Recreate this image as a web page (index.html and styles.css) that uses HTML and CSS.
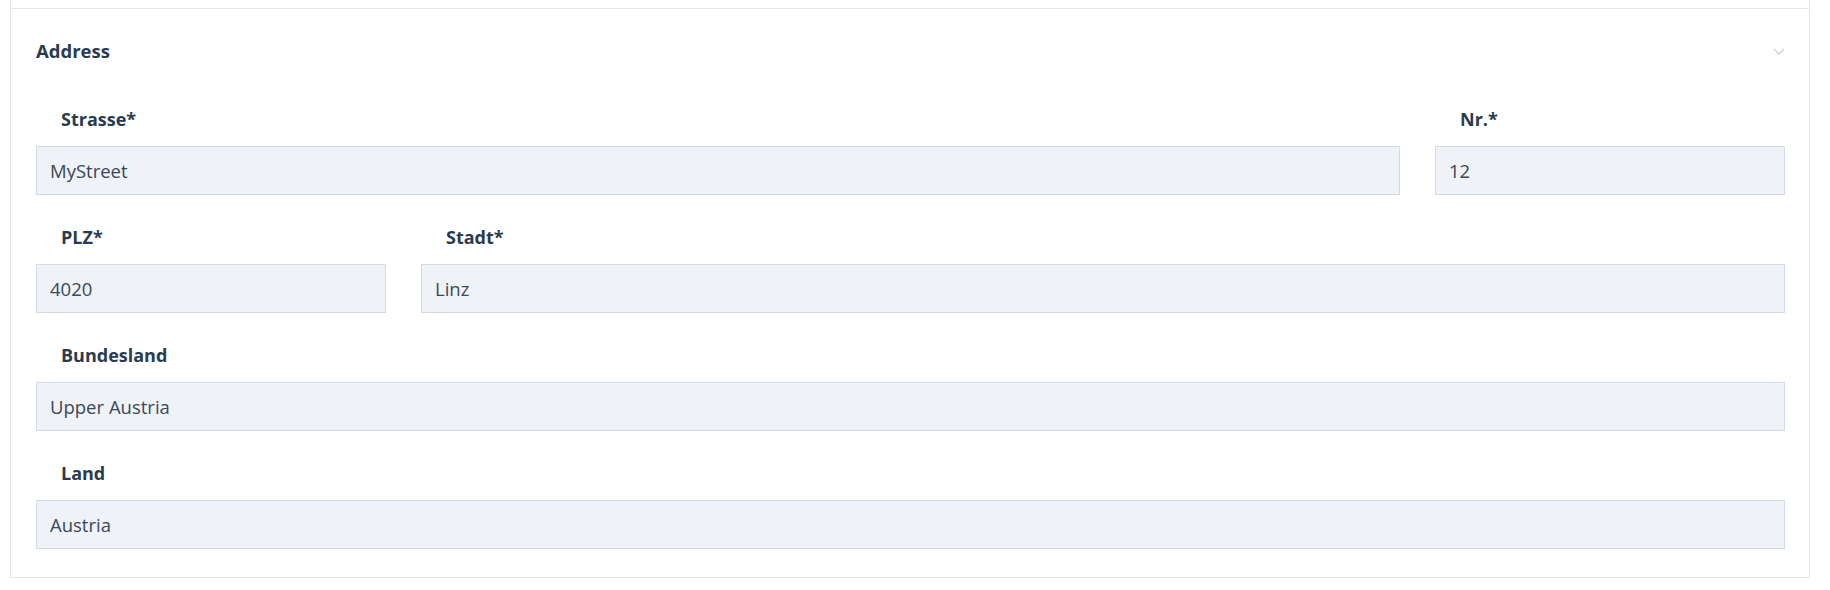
FILE: index.html
```html
<!DOCTYPE html>
<html lang="de">
<head>
<meta charset="utf-8">
<title>Address</title>
<link rel="stylesheet" href="styles.css">
</head>
<body>
<div class="card">
  <div class="card-prev"></div>
  <section class="section">
    <header class="section-head">
      <h2 class="section-title">Address</h2>
      <svg class="chevron" width="12" height="7" viewBox="0 0 12 7"><path d="M1 1l5 5 5-5" fill="none" stroke="#c9d1dc" stroke-width="1.3"/></svg>
    </header>
    <div class="form">
      <div class="row row-street">
        <div class="field"><label class="label">Strasse*</label><div class="input">MyStreet</div></div>
        <div class="field"><label class="label">Nr.*</label><div class="input">12</div></div>
      </div>
      <div class="row row-city">
        <div class="field"><label class="label">PLZ*</label><div class="input">4020</div></div>
        <div class="field"><label class="label">Stadt*</label><div class="input">Linz</div></div>
      </div>
      <div class="row">
        <div class="field"><label class="label">Bundesland</label><div class="input">Upper Austria</div></div>
      </div>
      <div class="row">
        <div class="field"><label class="label">Land</label><div class="input">Austria</div></div>
      </div>
    </div>
  </section>
</div>
</body>
</html>
```
FILE: styles.css
```css
* { box-sizing: border-box; }
html, body { margin: 0; padding: 0; background: #ffffff; }
body {
  font-family: "Open Sans", "Noto Sans", sans-serif;
  color: #2c3e50;
}
.card {
  margin: 0 20px 0 10px;
  border: 1px solid #e3e8ef;
  border-top: none;
  background: #fff;
}
.card-prev { height: 8px; }
.section {
  border-top: 1px solid #e3e8ef;
  padding: 0 24px 28px 25px;
}
.section-head {
  display: flex;
  align-items: center;
  justify-content: space-between;
  height: 84px;
}
.section-title {
  margin: 0;
  font-size: 18.5px;
  font-weight: 700;
  line-height: 24px;
  color: #2a3b4f;
}
.chevron { display: block; }
.form {
  display: flex;
  flex-direction: column;
  gap: 31px;
  padding-top: 15px;
}
.row { display: grid; grid-template-columns: 1fr; column-gap: 35px; }
.row-street { grid-template-columns: 1fr 350px; }
.row-city { grid-template-columns: 350px 1fr; }
.field { display: flex; flex-direction: column; }
.label {
  display: block;
  padding-left: 25px;
  font-size: 18px;
  font-weight: 700;
  line-height: 23px;
  margin-bottom: 15px;
  color: #2a3b4f;
}
.input {
  height: 49px;
  background: #eff2f7;
  border: 1px solid #d3dce8;
  border-bottom-color: #d0d9e4;
  padding: 0 13px;
  display: flex;
  align-items: center;
  font-size: 18.5px;
  color: #3a4858;
}
```
